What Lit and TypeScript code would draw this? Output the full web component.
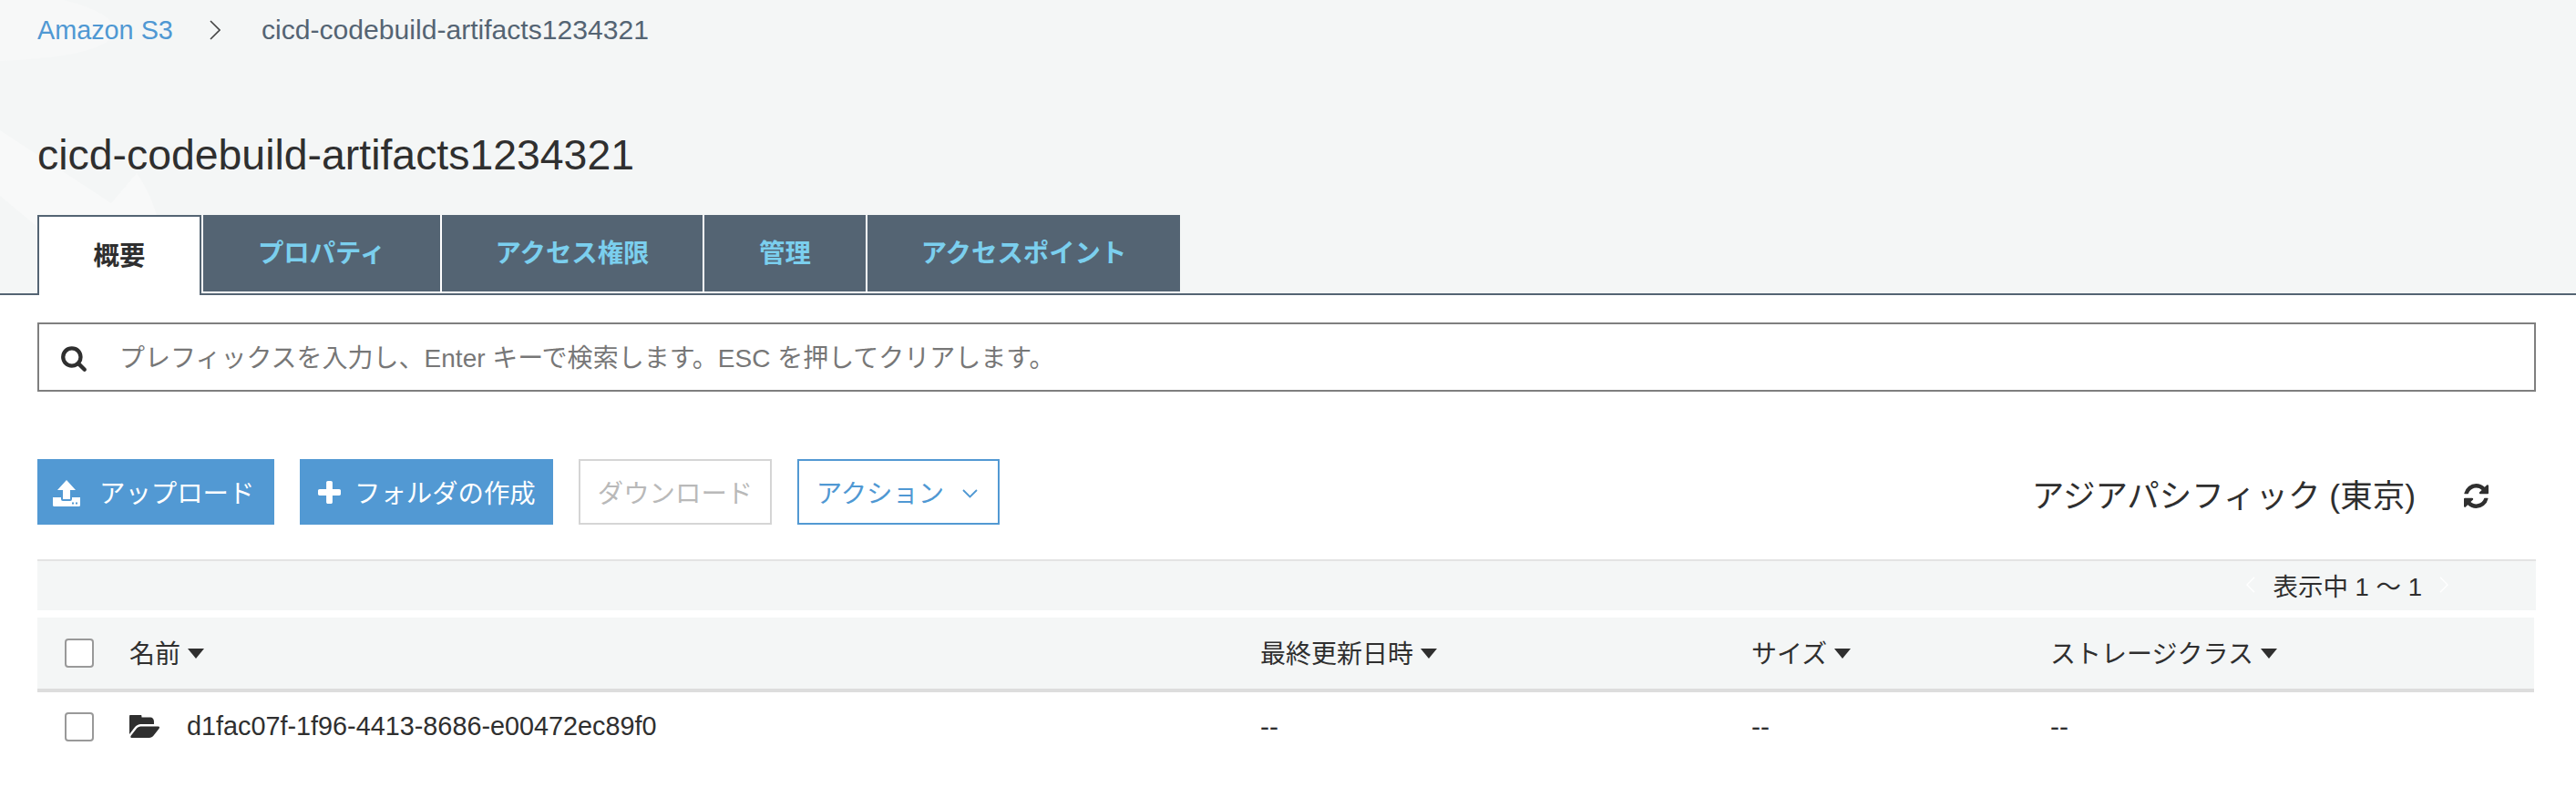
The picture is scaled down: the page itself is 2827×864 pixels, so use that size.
import { LitElement, html, css, svg } from "lit";
import { customElement } from "lit/decorators.js";

const ic = (vb: string, d: string, cls: string) =>
  html`<svg class=${cls} viewBox=${vb} preserveAspectRatio="none" aria-hidden="true">${svg`<path d=${d} fill="currentColor" fill-rule="evenodd"></path>`}</svg>`;

const SEARCH = "M1216 832q0-185-131.5-316.5t-316.5-131.5-316.5 131.5-131.5 316.5 131.5 316.5 316.5 131.5 316.5-131.5 131.5-316.5zm512 832q0 52-38 90t-90 38q-54 0-90-38l-343-342q-179 124-399 124-143 0-273.5-55.5t-225-150-150-225-55.5-273.5 55.5-273.5 150-225 225-150 273.5-55.5 273.5 55.5 225 150 150 225 55.5 273.5q0 220-124 399l343 343q37 37 37 90z";
const PLUS = "M1600 736v192q0 40-28 68t-68 28h-416v416q0 40-28 68t-68 28h-192q-40 0-68-28t-28-68v-416h-416q-40 0-68-28t-28-68v-192q0-40 28-68t68-28h416v-416q0-40 28-68t68-28h192q40 0 68 28t28 68v416h416q40 0 68 28t28 68z";
const REFRESH = "M1639 1056q0 5-1 7-64 268-268 434.5t-478 166.5q-146 0-282.5-55t-243.5-157l-129 129q-19 19-45 19t-45-19-19-45v-448q0-26 19-45t45-19h448q26 0 45 19t19 45-19 45l-137 137q71 66 161 102t187 36q134 0 250-65t186-179q11-17 53-117 8-23 30-23h192q13 0 22.5 9.5t9.5 22.5zm25-800v448q0 26-19 45t-45 19h-448q-26 0-45-19t-19-45 19-45l138-138q-148-137-349-137-134 0-250 65t-186 179q-11 17-53 117-8 23-30 23h-199q-13 0-22.5-9.5t-9.5-22.5v-7q65-268 270-434.5t480-166.5q146 0 284 55.5t245 156.5l130-129q19-19 45-19t45 19 19 45z";
const FOLDER = "M1879 952q0 31-31 66l-336 396q-43 51-120.5 86.5t-143.5 35.5h-1088q-34 0-60.5-13t-26.5-43q0-31 31-66l336-396q43-51 120.5-86.5t143.5-35.5h1088q34 0 60.5 13t26.5 43zm-343-344v160h-832q-94 0-197 47.5t-164 119.5l-337 396-5 6q0-4-.5-12.5t-.5-12.5v-960q0-92 66-158t158-66h320q92 0 158 66t66 158v32h544q92 0 158 66t66 158z";
const UPLOAD = "M15 0L25 11H19V21H11V11H5ZM0 19H9V21Q9 23 11 23H19Q21 23 21 21V19H30V27.5Q30 29 28.5 29H1.5Q0 29 0 27.5ZM21 24.5H23V26.5H21ZM25 24.5H27V26.5H25Z";

@customElement("app-root")
export class AppRoot extends LitElement {
  static styles = css`
    :host { display: block; width: 2827px; height: 864px; overflow: hidden; background: #fff; color: #2f2f2f;
      font-family: "Liberation Sans", "Noto Sans CJK JP", sans-serif; font-size: 28px; }
    * { box-sizing: border-box; }
    .head { position: relative; height: 324px; background: #f4f6f6; border-bottom: 2px solid #546473; padding: 0 0 0 41px; display: flex; flex-direction: column; }
    .deco { position: absolute; left: 0; top: 0; width: 200px; height: 322px; }
    .crumbs { position: relative; display: flex; align-items: center; height: 66px; font-size: 30.1px; color: #546473; }
    .crumbs a { color: #4f98d3; width: 189px; font-size: 28.8px; }
    .sep { width: 57px; height: 22px; color: #444; }
    .sep svg { display: block; width: 12px; height: 22px; }
    h1 { position: relative; margin: 0; font-weight: 400; font-size: 46.4px; line-height: 54px; padding-top: 77px; height: 170px; color: #2f2f2f; }
    .tabs { position: relative; display: flex; align-items: flex-start; height: 86px; }
    .tab { height: 86px; display: flex; align-items: center; justify-content: center; padding-bottom: 6px; font-weight: 700; font-size: 28.4px;
      background: #546473; color: #7bcfee; border-bottom: 2px solid #fff; border-right: 2px solid #fff; }
    .tab.on { height: 88px; background: #fff; color: #2f2f2f; border: 2px solid #546473; border-bottom: none; margin-right: 2px; padding-bottom: 6px; }
    .w1 { width: 180px; } .w2 { width: 262px; } .w3 { width: 288px; } .w4 { width: 179px; } .w5 { width: 343px; border-right: none !important; }

    .search { margin: 30px 44px 0 41px; height: 76px; border: 2px solid #7f7f7f; display: flex; align-items: center; padding-left: 23px; gap: 35px; color: #777; font-size: 28px; }
    .search svg { width: 30px; height: 30px; color: #2f2f2f; flex: none; margin-top: 2px; }
    .search span { margin-top: -2px; }

    .bar { margin: 74px 44px 0 41px; height: 72px; display: flex; align-items: center; gap: 28px; }
    .btn { height: 72px; display: flex; align-items: center; font-size: 28.4px; }
    .btn span { margin-top: -2px; }
    .pri { background: #5299d3; color: #fff; }
    .up { width: 260px; gap: 21px; padding-left: 17px; }
    .up svg { width: 30px; height: 29px; margin-top: 3px; }
    .fo { width: 278px; gap: 15px; padding-left: 20px; }
    .fo svg { width: 25px; height: 25px; }
    .dis { width: 212px; border: 2px solid #d5d5d5; color: #b9b9b9; justify-content: center; }
    .act { width: 222px; border: 2px solid #5299d3; color: #4f98d3; justify-content: center; gap: 20px; padding-right: 3px; }
    .act svg { width: 17px; height: 10px; margin-top: 4px; }
    .region { font-size: 35.5px; color: #2f2f2f; margin: 2px 25px 0 auto; }
    .refresh { width: 27px; height: 27px; margin-right: 52px; margin-top: 8px; color: #2f2f2f; flex: none; }

    .pager { margin: 38px 44px 0 41px; height: 56px; background: #f4f6f6; border-top: 2px solid #e3e3e3; display: flex; align-items: center; justify-content: flex-end; padding: 0 96px 2px 0; font-size: 27.5px; gap: 19px; }
    .pager svg { width: 10px; height: 18px; color: #fff; }

    .row { margin: 0 46px 0 41px; display: grid; grid-template-columns: 101px 1241px 539px 328px 1fr; align-items: center; }
    .thead { margin-top: 8px; height: 82px; background: #f4f6f6; border-bottom: 4px solid #ddd; padding-bottom: 1px; }
    .tbody { height: 75px; font-size: 28.8px; }
    .cb { margin-left: 30px; width: 32px; height: 32px; background: #fff; border: 2px solid #999; border-radius: 4px; }
    .th { display: flex; align-items: center; gap: 8px; margin-top: -2px; }
    .tri { width: 0; height: 0; border-left: 9.5px solid transparent; border-right: 9.5px solid transparent; border-top: 11px solid #2f2f2f; margin-top: 4px; }
    .name { display: flex; align-items: center; gap: 30px; }
    .name svg { width: 33px; height: 25px; flex: none; }
    .dash { font-size: 30px; }
  `;

  private chev(points: string) {
    return html`<svg viewBox="0 0 12 22" aria-hidden="true">${svg`<path d=${points} fill="none" stroke="currentColor" stroke-width="1.6"></path>`}</svg>`;
  }

  render() {
    return html`
      <div class="head">
        <svg class="deco" viewBox="0 0 200 322" aria-hidden="true">
          <path d="M0 0H70Q125 14 127 34Q120 62 0 67Z" fill="#f7f8f8"></path>
          <path d="M0 143L122 223L150 190Q185 240 180 322H0Z" fill="#f8f9f9"></path>
          <path d="M0 215L90 290L150 322H0Z" fill="#f4f6f6"></path>
        </svg>
        <nav class="crumbs">
          <a>Amazon S3</a>
          <span class="sep">${this.chev("M1 1L11 11L1 21")}</span>
          <span>cicd-codebuild-artifacts1234321</span>
        </nav>
        <h1>cicd-codebuild-artifacts1234321</h1>
        <div class="tabs">
          <div class="tab on w1">概要</div>
          <div class="tab w2">プロパティ</div>
          <div class="tab w3">アクセス権限</div>
          <div class="tab w4">管理</div>
          <div class="tab w5">アクセスポイント</div>
        </div>
      </div>

      <div class="search">
        ${ic("0 0 1792 1792", SEARCH, "")}
        <span>プレフィックスを入力し、Enter キーで検索します。ESC を押してクリアします。</span>
      </div>

      <div class="bar">
        <div class="btn pri up">${ic("0 0 30 29", UPLOAD, "")}<span>アップロード</span></div>
        <div class="btn pri fo">${ic("192 128 1408 1408", PLUS, "")}<span>フォルダの作成</span></div>
        <div class="btn dis"><span>ダウンロード</span></div>
        <div class="btn act"><span>アクション</span><svg viewBox="0 0 17 10" aria-hidden="true"><path d="M1 1L8.5 8.5L16 1" fill="none" stroke="currentColor" stroke-width="1.8"></path></svg></div>
        <div class="region">アジアパシフィック (東京)</div>
        ${ic("128 128 1536 1536", REFRESH, "refresh")}
      </div>

      <div class="pager">
        ${this.chev("M11 1L1 11L11 21")}
        <span>表示中 1 〜 1</span>
        ${this.chev("M1 1L11 11L1 21")}
      </div>

      <div class="row thead">
        <div class="cb"></div>
        <div class="th">名前<i class="tri"></i></div>
        <div class="th">最終更新日時<i class="tri"></i></div>
        <div class="th">サイズ<i class="tri"></i></div>
        <div class="th">ストレージクラス<i class="tri"></i></div>
      </div>
      <div class="row tbody">
        <div class="cb"></div>
        <div class="name">${ic("0 256 1879 1280", FOLDER, "")}<span>d1fac07f-1f96-4413-8686-e00472ec89f0</span></div>
        <div class="dash">--</div>
        <div class="dash">--</div>
        <div class="dash">--</div>
      </div>
    `;
  }
}
